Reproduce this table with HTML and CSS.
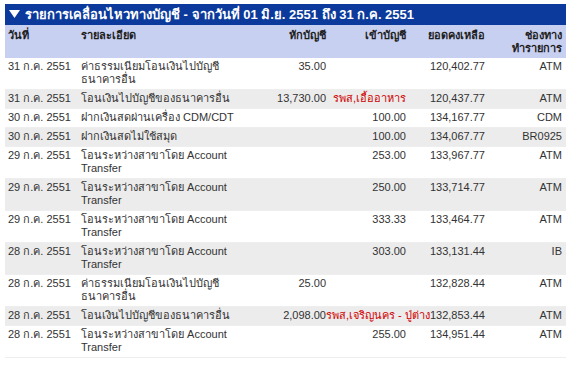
FILE: index.html
```html
<!DOCTYPE html>
<html lang="th">
<head>
    <meta charset="UTF-8">
    <title>รายการเคลื่อนไหวทางบัญชี</title>
    <link rel="stylesheet" href="styles.css">
</head>
<body>
    <div class="statement">
        <div class="title-bar">
            <svg class="arrow" width="11" height="9" viewBox="0 0 11 9"><path d="M0 0H11L5.5 8Z" fill="#fff"/></svg>
            <span>รายการเคลื่อนไหวทางบัญชี - จากวันที่ 01 มิ.ย. 2551 ถึง 31 ก.ค. 2551</span>
        </div>
        <table>
            <colgroup>
                <col class="c-date">
                <col class="c-detail">
                <col class="c-debit">
                <col class="c-credit">
                <col class="c-balance">
                <col class="c-channel">
            </colgroup>
            <thead>
                <tr>
                    <th>วันที่</th>
                    <th>รายละเอียด</th>
                    <th class="num">หักบัญชี</th>
                    <th class="num">เข้าบัญชี</th>
                    <th class="num">ยอดคงเหลือ</th>
                    <th class="num">ช่องทาง<br>ทำรายการ</th>
                </tr>
            </thead>
            <tbody>
                <tr>
                    <td>31 ก.ค. 2551</td>
                    <td>ค่าธรรมเนียมโอนเงินไปบัญชี<br>ธนาคารอื่น</td>
                    <td class="num">35.00</td>
                    <td class="num"></td>
                    <td class="num">120,402.77</td>
                    <td class="num">ATM</td>
                </tr>
                <tr class="alt">
                    <td>31 ก.ค. 2551</td>
                    <td>โอนเงินไปบัญชีของธนาคารอื่น</td>
                    <td class="num">13,730.00</td>
                    <td><span class="note">รพส,เอื้ออาหาร</span></td>
                    <td class="num">120,437.77</td>
                    <td class="num">ATM</td>
                </tr>
                <tr>
                    <td>30 ก.ค. 2551</td>
                    <td>ฝากเงินสดผ่านเครื่อง CDM/CDT</td>
                    <td class="num"></td>
                    <td class="num">100.00</td>
                    <td class="num">134,167.77</td>
                    <td class="num">CDM</td>
                </tr>
                <tr class="alt">
                    <td>30 ก.ค. 2551</td>
                    <td>ฝากเงินสดไม่ใช้สมุด</td>
                    <td class="num"></td>
                    <td class="num">100.00</td>
                    <td class="num">134,067.77</td>
                    <td class="num">BR0925</td>
                </tr>
                <tr>
                    <td>29 ก.ค. 2551</td>
                    <td>โอนระหว่างสาขาโดย Account<br>Transfer</td>
                    <td class="num"></td>
                    <td class="num">253.00</td>
                    <td class="num">133,967.77</td>
                    <td class="num">ATM</td>
                </tr>
                <tr class="alt">
                    <td>29 ก.ค. 2551</td>
                    <td>โอนระหว่างสาขาโดย Account<br>Transfer</td>
                    <td class="num"></td>
                    <td class="num">250.00</td>
                    <td class="num">133,714.77</td>
                    <td class="num">ATM</td>
                </tr>
                <tr>
                    <td>29 ก.ค. 2551</td>
                    <td>โอนระหว่างสาขาโดย Account<br>Transfer</td>
                    <td class="num"></td>
                    <td class="num">333.33</td>
                    <td class="num">133,464.77</td>
                    <td class="num">ATM</td>
                </tr>
                <tr class="alt">
                    <td>28 ก.ค. 2551</td>
                    <td>โอนระหว่างสาขาโดย Account<br>Transfer</td>
                    <td class="num"></td>
                    <td class="num">303.00</td>
                    <td class="num">133,131.44</td>
                    <td class="num">IB</td>
                </tr>
                <tr>
                    <td>28 ก.ค. 2551</td>
                    <td>ค่าธรรมเนียมโอนเงินไปบัญชี<br>ธนาคารอื่น</td>
                    <td class="num">25.00</td>
                    <td class="num"></td>
                    <td class="num">132,828.44</td>
                    <td class="num">ATM</td>
                </tr>
                <tr class="alt">
                    <td>28 ก.ค. 2551</td>
                    <td>โอนเงินไปบัญชีของธนาคารอื่น</td>
                    <td class="num">2,098.00</td>
                    <td><span class="note wide">รพส,เจริญนคร - ปู่ต่าง</span></td>
                    <td class="num">132,853.44</td>
                    <td class="num">ATM</td>
                </tr>
                <tr>
                    <td>28 ก.ค. 2551</td>
                    <td>โอนระหว่างสาขาโดย Account<br>Transfer</td>
                    <td class="num"></td>
                    <td class="num">255.00</td>
                    <td class="num">134,951.44</td>
                    <td class="num">ATM</td>
                </tr>
            </tbody>
        </table>
    </div>
</body>
</html>
```

FILE: styles.css
```css
body {
    margin: 4px 0 0 5px;
    background-color: #fff;
    font-family: Tahoma, "Liberation Sans", Arial, sans-serif;
    font-size: 11px;
    color: #333;
}

.statement {
    width: 561px;
}

.title-bar {
    background-color: #0b3a9c;
    color: #fff;
    font-weight: bold;
    font-size: 13px;
    height: 21px;
    display: flex;
    align-items: center;
    gap: 5px;
    padding-left: 4px;
}

.arrow {
    display: block;
}

table {
    width: 561px;
    table-layout: fixed;
    border-collapse: collapse;
}

.c-date { width: 73px; }
.c-detail { width: 180px; }
.c-debit { width: 71px; }
.c-credit { width: 80px; }
.c-balance { width: 79px; }
.c-channel { width: 78px; }

th {
    background-color: #c8d0f2;
    color: #1e1e1e;
    font-weight: bold;
    text-align: left;
    vertical-align: top;
    line-height: 13px;
    padding: 4px 3px 3px;
    height: 26px;
}

td {
    vertical-align: top;
    line-height: 13px;
    padding: 2px 3px 3px;
    white-space: nowrap;
    overflow: visible;
}

.num {
    text-align: right;
}

th.num:last-child,
td.num:last-child {
    padding-right: 4px;
}

tbody tr {
    border-bottom: 1px solid #eeeeee;
}

tr.alt {
    background-color: #ececec;
}

.note {
    color: #d00000;
    margin-left: 1px;
}

.note.wide {
    margin-left: -6px;
}
```
